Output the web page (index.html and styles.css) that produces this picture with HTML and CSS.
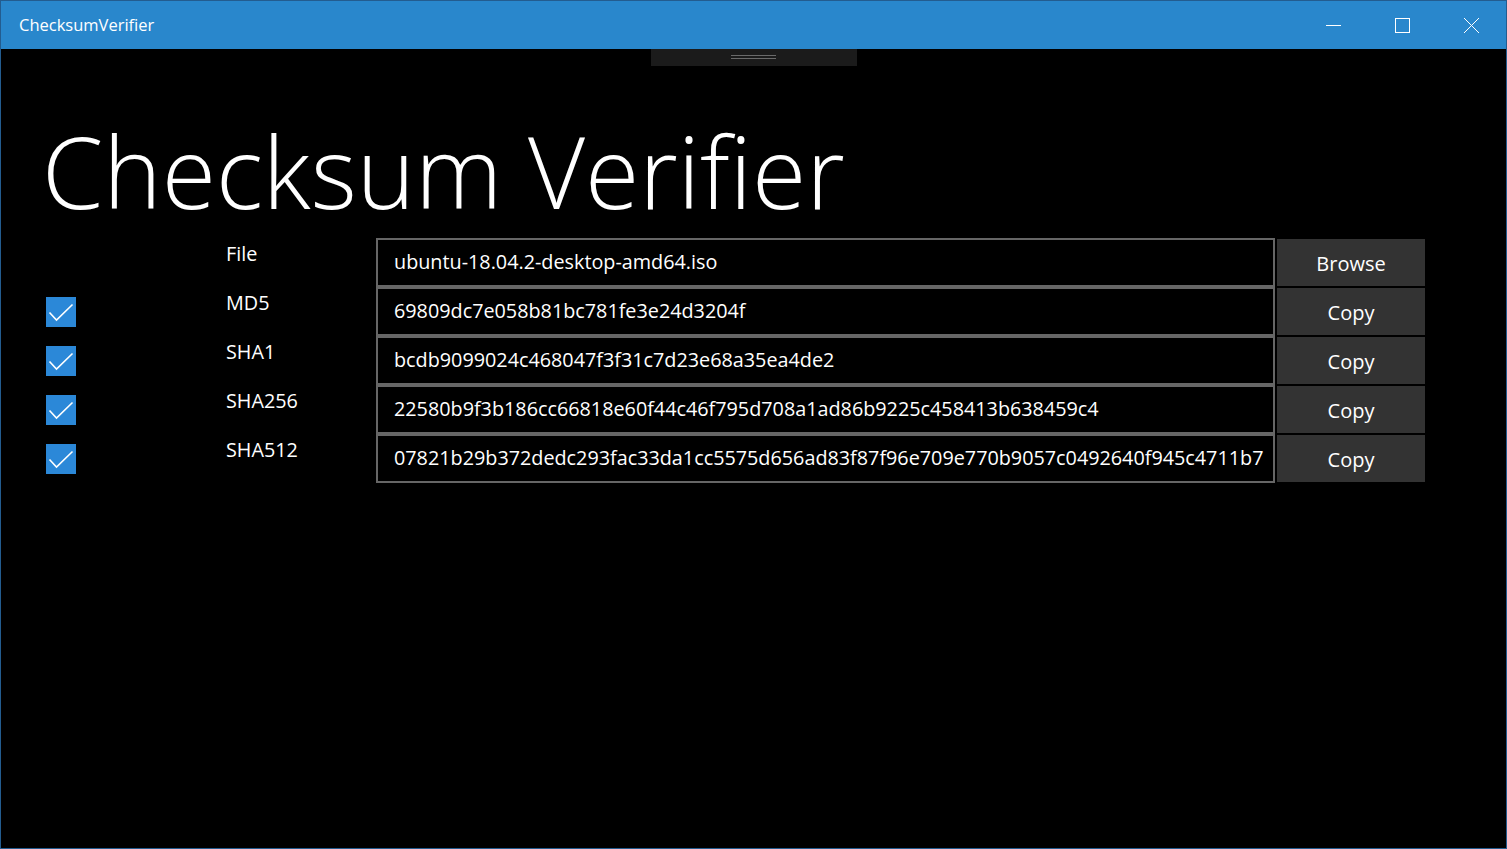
FILE: index.html
```html
<!DOCTYPE html>
<html>
<head>
<meta charset="utf-8">
<title>ChecksumVerifier</title>
<link rel="stylesheet" href="styles.css">
</head>
<body>
<div class="window">
  <div class="titlebar">
    <span class="app-title">ChecksumVerifier</span>
    <div class="controls">
      <div class="ctl"><svg width="15" height="15" viewBox="0 0 15 15"><line x1="0" y1="7.5" x2="15" y2="7.5" stroke="#fff" stroke-width="1"/></svg></div>
      <div class="ctl"><svg width="15" height="15" viewBox="0 0 15 15"><rect x="0.5" y="0.5" width="14" height="14" fill="none" stroke="#fff" stroke-width="1"/></svg></div>
      <div class="ctl"><svg width="15" height="15" viewBox="0 0 15 15"><path d="M0 0 L15 15 M15 0 L0 15" stroke="#fff" stroke-width="1"/></svg></div>
    </div>
  </div>
  <div class="content">
    <div class="handle-row"><div class="handle"><span class="grip"></span><span class="grip"></span></div></div>
    <h1 class="heading">Checksum Verifier</h1>
    <div class="grid">
      <div class="cell"></div>
      <div class="label">File</div>
      <div class="field">ubuntu-18.04.2-desktop-amd64.iso</div>
      <div class="btn-cell"><button class="btn">Browse</button></div>

      <div class="cell"><span class="check"><svg width="30" height="30" viewBox="0 0 30 30"><polyline points="3.5,15.5 10.5,23 26.5,7.5" fill="none" stroke="#fff" stroke-width="1.6"/></svg></span></div>
      <div class="label">MD5</div>
      <div class="field">69809dc7e058b81bc781fe3e24d3204f</div>
      <div class="btn-cell"><button class="btn">Copy</button></div>

      <div class="cell"><span class="check"><svg width="30" height="30" viewBox="0 0 30 30"><polyline points="3.5,15.5 10.5,23 26.5,7.5" fill="none" stroke="#fff" stroke-width="1.6"/></svg></span></div>
      <div class="label">SHA1</div>
      <div class="field">bcdb9099024c468047f3f31c7d23e68a35ea4de2</div>
      <div class="btn-cell"><button class="btn">Copy</button></div>

      <div class="cell"><span class="check"><svg width="30" height="30" viewBox="0 0 30 30"><polyline points="3.5,15.5 10.5,23 26.5,7.5" fill="none" stroke="#fff" stroke-width="1.6"/></svg></span></div>
      <div class="label">SHA256</div>
      <div class="field">22580b9f3b186cc66818e60f44c46f795d708a1ad86b9225c458413b638459c4</div>
      <div class="btn-cell"><button class="btn">Copy</button></div>

      <div class="cell"><span class="check"><svg width="30" height="30" viewBox="0 0 30 30"><polyline points="3.5,15.5 10.5,23 26.5,7.5" fill="none" stroke="#fff" stroke-width="1.6"/></svg></span></div>
      <div class="label">SHA512</div>
      <div class="field">07821b29b372dedc293fac33da1cc5575d656ad83f87f96e709e770b9057c0492640f945c4711b7</div>
      <div class="btn-cell"><button class="btn">Copy</button></div>
    </div>
  </div>
</div>
</body>
</html>
```
FILE: styles.css
```css
* { box-sizing: border-box; }
html, body { margin: 0; padding: 0; background: #000; }
body { font-family: "Open Sans", "Noto Sans", sans-serif; color: #fff; }
.window {
  width: 1507px;
  height: 849px;
  border: 1px solid #235c8f;
  background: #000;
  display: flex;
  flex-direction: column;
  overflow: hidden;
}
.titlebar {
  height: 48px;
  flex: none;
  background: #2987cc;
  display: flex;
  align-items: center;
  justify-content: space-between;
}
.app-title {
  padding-left: 18px;
  font-size: 16.5px;
  color: #fff;
  padding-bottom: 1px;
}
.controls { display: flex; height: 100%; }
.ctl {
  width: 69px;
  height: 100%;
  display: flex;
  align-items: center;
  justify-content: center;
}
.content { flex: 1; display: flex; flex-direction: column; }
.handle-row { display: flex; justify-content: center; }
.handle {
  width: 206px;
  height: 17px;
  background: #1b1b1b;
  display: flex;
  flex-direction: column;
  align-items: center;
  padding-top: 6px;
  gap: 2px;
}
.grip { width: 45px; height: 1px; background: #6a6a6a; }
.heading {
  margin: 56px 0 0 41px;
  font-weight: 300;
  font-size: 98.8px;
  line-height: 1;
  letter-spacing: 0;
  height: 116px;
}
.grid {
  margin-left: 45px;
  display: grid;
  grid-template-columns: 180px 150px 899px 150px;
  grid-auto-rows: 49px;
}
.cell { display: flex; align-items: center; }
.check {
  width: 30px;
  height: 30px;
  background: #2b88d8;
  display: block;
}
.check svg { display: block; }
.label {
  font-size: 19.8px;
  padding-top: 2px;
}
.field {
  border: 2px solid #666;
  font-size: 19.8px;
  padding: 0 8px 2px 16px;
  display: flex;
  align-items: center;
  white-space: nowrap;
  overflow: hidden;
}
.btn-cell { padding: 1px 0 1px 2px; }
.btn {
  width: 148px;
  height: 47px;
  border: none;
  background: #333;
  color: #fff;
  font-family: "Open Sans", "Noto Sans", sans-serif;
  font-size: 20px;
  padding: 2px 0 0 0;
}
```
